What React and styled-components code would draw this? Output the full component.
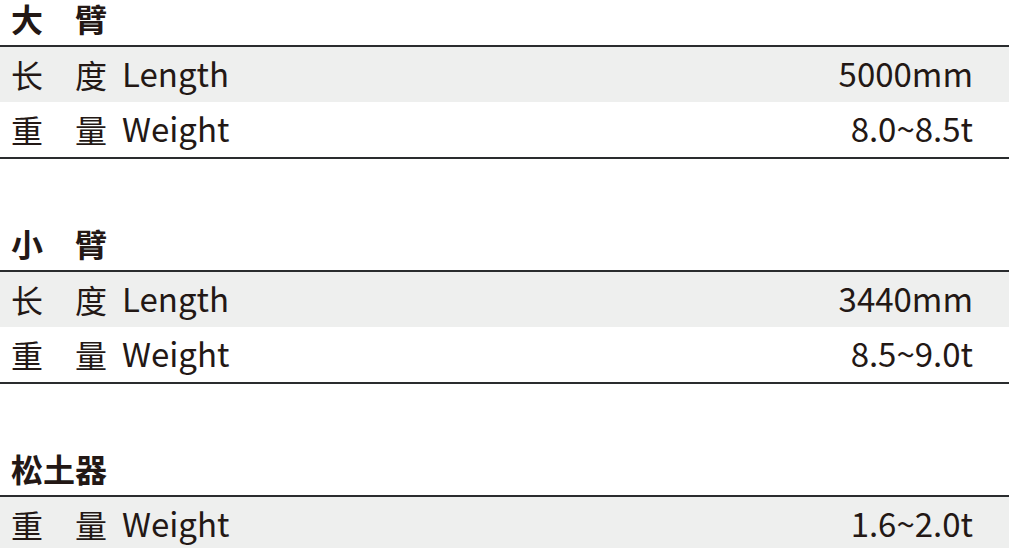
import React from 'react';
import styled, { createGlobalStyle } from 'styled-components';

const GlobalStyle = createGlobalStyle`
    html, body {
        margin: 0;
        padding: 0;
        background: #ffffff;
        overflow: hidden;
    }
    body {
        font-family: 'Noto Sans CJK SC', 'Noto Sans', sans-serif;
        color: #231815;
    }
`;

const Page = styled.div`
    width: 1009px;
    display: flex;
    flex-direction: column;
`;

const Section = styled.section`
    display: flex;
    flex-direction: column;
    margin-bottom: 66px;
`;

const Heading = styled.h2`
    margin: 0;
    height: 47px;
    padding: 0 0 9px 11px;
    box-sizing: border-box;
    display: flex;
    align-items: center;
    font-size: 32px;
    font-weight: 700;
    line-height: 1;
    white-space: pre;
    border-bottom: 2px solid #2a2c2e;
`;

const Table = styled.div`
    display: flex;
    flex-direction: column;
    border-bottom: 2px solid #2a2c2e;
`;

const Row = styled.div`
    height: 55px;
    display: flex;
    align-items: center;
    justify-content: space-between;
    padding: 0 36px 2px 11px;
    box-sizing: border-box;
    font-size: 32px;
    line-height: 1;
    background: ${({ shaded }) => (shaded ? '#eeefee' : '#ffffff')};
`;

const Label = styled.div`
    display: flex;
    align-items: center;
    white-space: pre;
`;

const En = styled.span`
    margin-left: 15px;
    font-size: 33px;
`;

const Value = styled.div`
    text-align: right;
    font-size: 33px;
`;

const specs = [
    {
        title: '大　臂',
        rows: [
            { cn: '长　度', en: 'Length', value: '5000mm' },
            { cn: '重　量', en: 'Weight', value: '8.0~8.5t' },
        ],
    },
    {
        title: '小　臂',
        rows: [
            { cn: '长　度', en: 'Length', value: '3440mm' },
            { cn: '重　量', en: 'Weight', value: '8.5~9.0t' },
        ],
    },
    {
        title: '松土器',
        rows: [{ cn: '重　量', en: 'Weight', value: '1.6~2.0t' }],
    },
];

const App = () => {
    return (
        <>
            <GlobalStyle />
            <Page>
                {specs.map((section) => (
                    <Section key={section.title}>
                        <Heading>{section.title}</Heading>
                        <Table>
                            {section.rows.map((row, i) => (
                                <Row key={row.en} shaded={i % 2 === 0}>
                                    <Label>
                                        <span>{row.cn}</span>
                                        <En>{row.en}</En>
                                    </Label>
                                    <Value>{row.value}</Value>
                                </Row>
                            ))}
                        </Table>
                    </Section>
                ))}
            </Page>
        </>
    );
};

export default App;
